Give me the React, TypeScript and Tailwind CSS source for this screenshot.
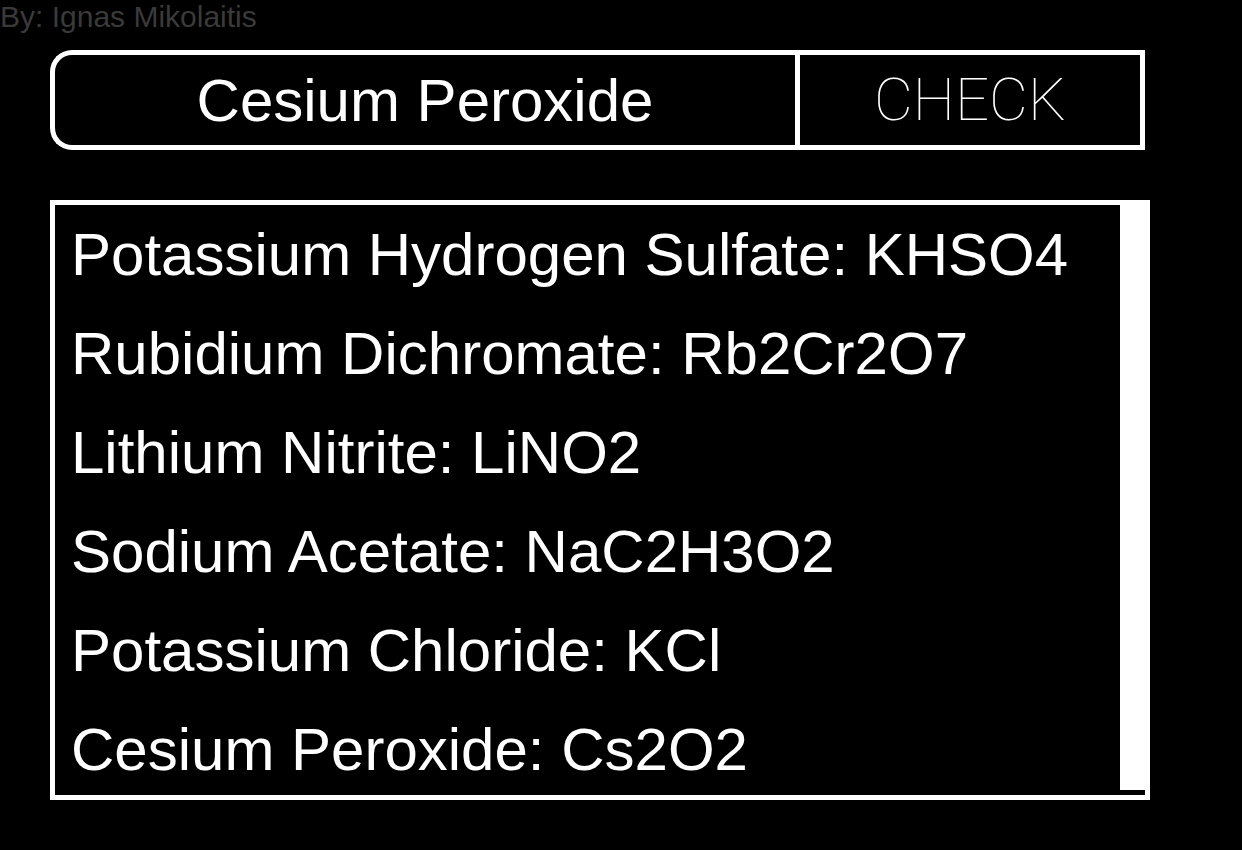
import { useState } from "react";

const compounds = [
  "Potassium Hydrogen Sulfate: KHSO4",
  "Rubidium Dichromate: Rb2Cr2O7",
  "Lithium Nitrite: LiNO2",
  "Sodium Acetate: NaC2H3O2",
  "Potassium Chloride: KCl",
  "Cesium Peroxide: Cs2O2",
];

export default function App() {
  const [guess, setGuess] = useState("Cesium Peroxide");

  return (
    <div className="min-h-screen bg-black font-['Liberation_Sans',Arial,sans-serif] text-white">
      <div className="h-[50px]">
        <p className="text-[30px] leading-[34px] text-[#3a3a3a]">By: Ignas Mikolaitis</p>
      </div>

      <div className="ml-[50px] flex h-[100px] w-[1095px]">
        <input
          value={guess}
          onChange={(e) => setGuess(e.target.value)}
          className="h-full w-[745px] min-w-0 shrink-0 rounded-l-[22px] border-[5px] border-r-0 border-white bg-black text-center text-[60px] text-white outline-none"
        />
        <button className="h-full w-[350px] shrink-0 border-[5px] border-white bg-black font-['Roboto',sans-serif] text-[60px] font-thin text-white">
          CHECK
        </button>
      </div>

      <div className="ml-[50px] mt-[50px] flex h-[600px] w-[1100px] border-[5px] border-white">
        <div className="flex-1 overflow-hidden">
          {compounds.map((c) => (
            <div key={c} className="pl-4 text-[60px] leading-[99px] whitespace-nowrap">
              {c}
            </div>
          ))}
        </div>
        <div className="flex w-[25px] flex-col pb-[5px]">
          <div className="flex-1 bg-white" />
        </div>
      </div>
    </div>
  );
}
